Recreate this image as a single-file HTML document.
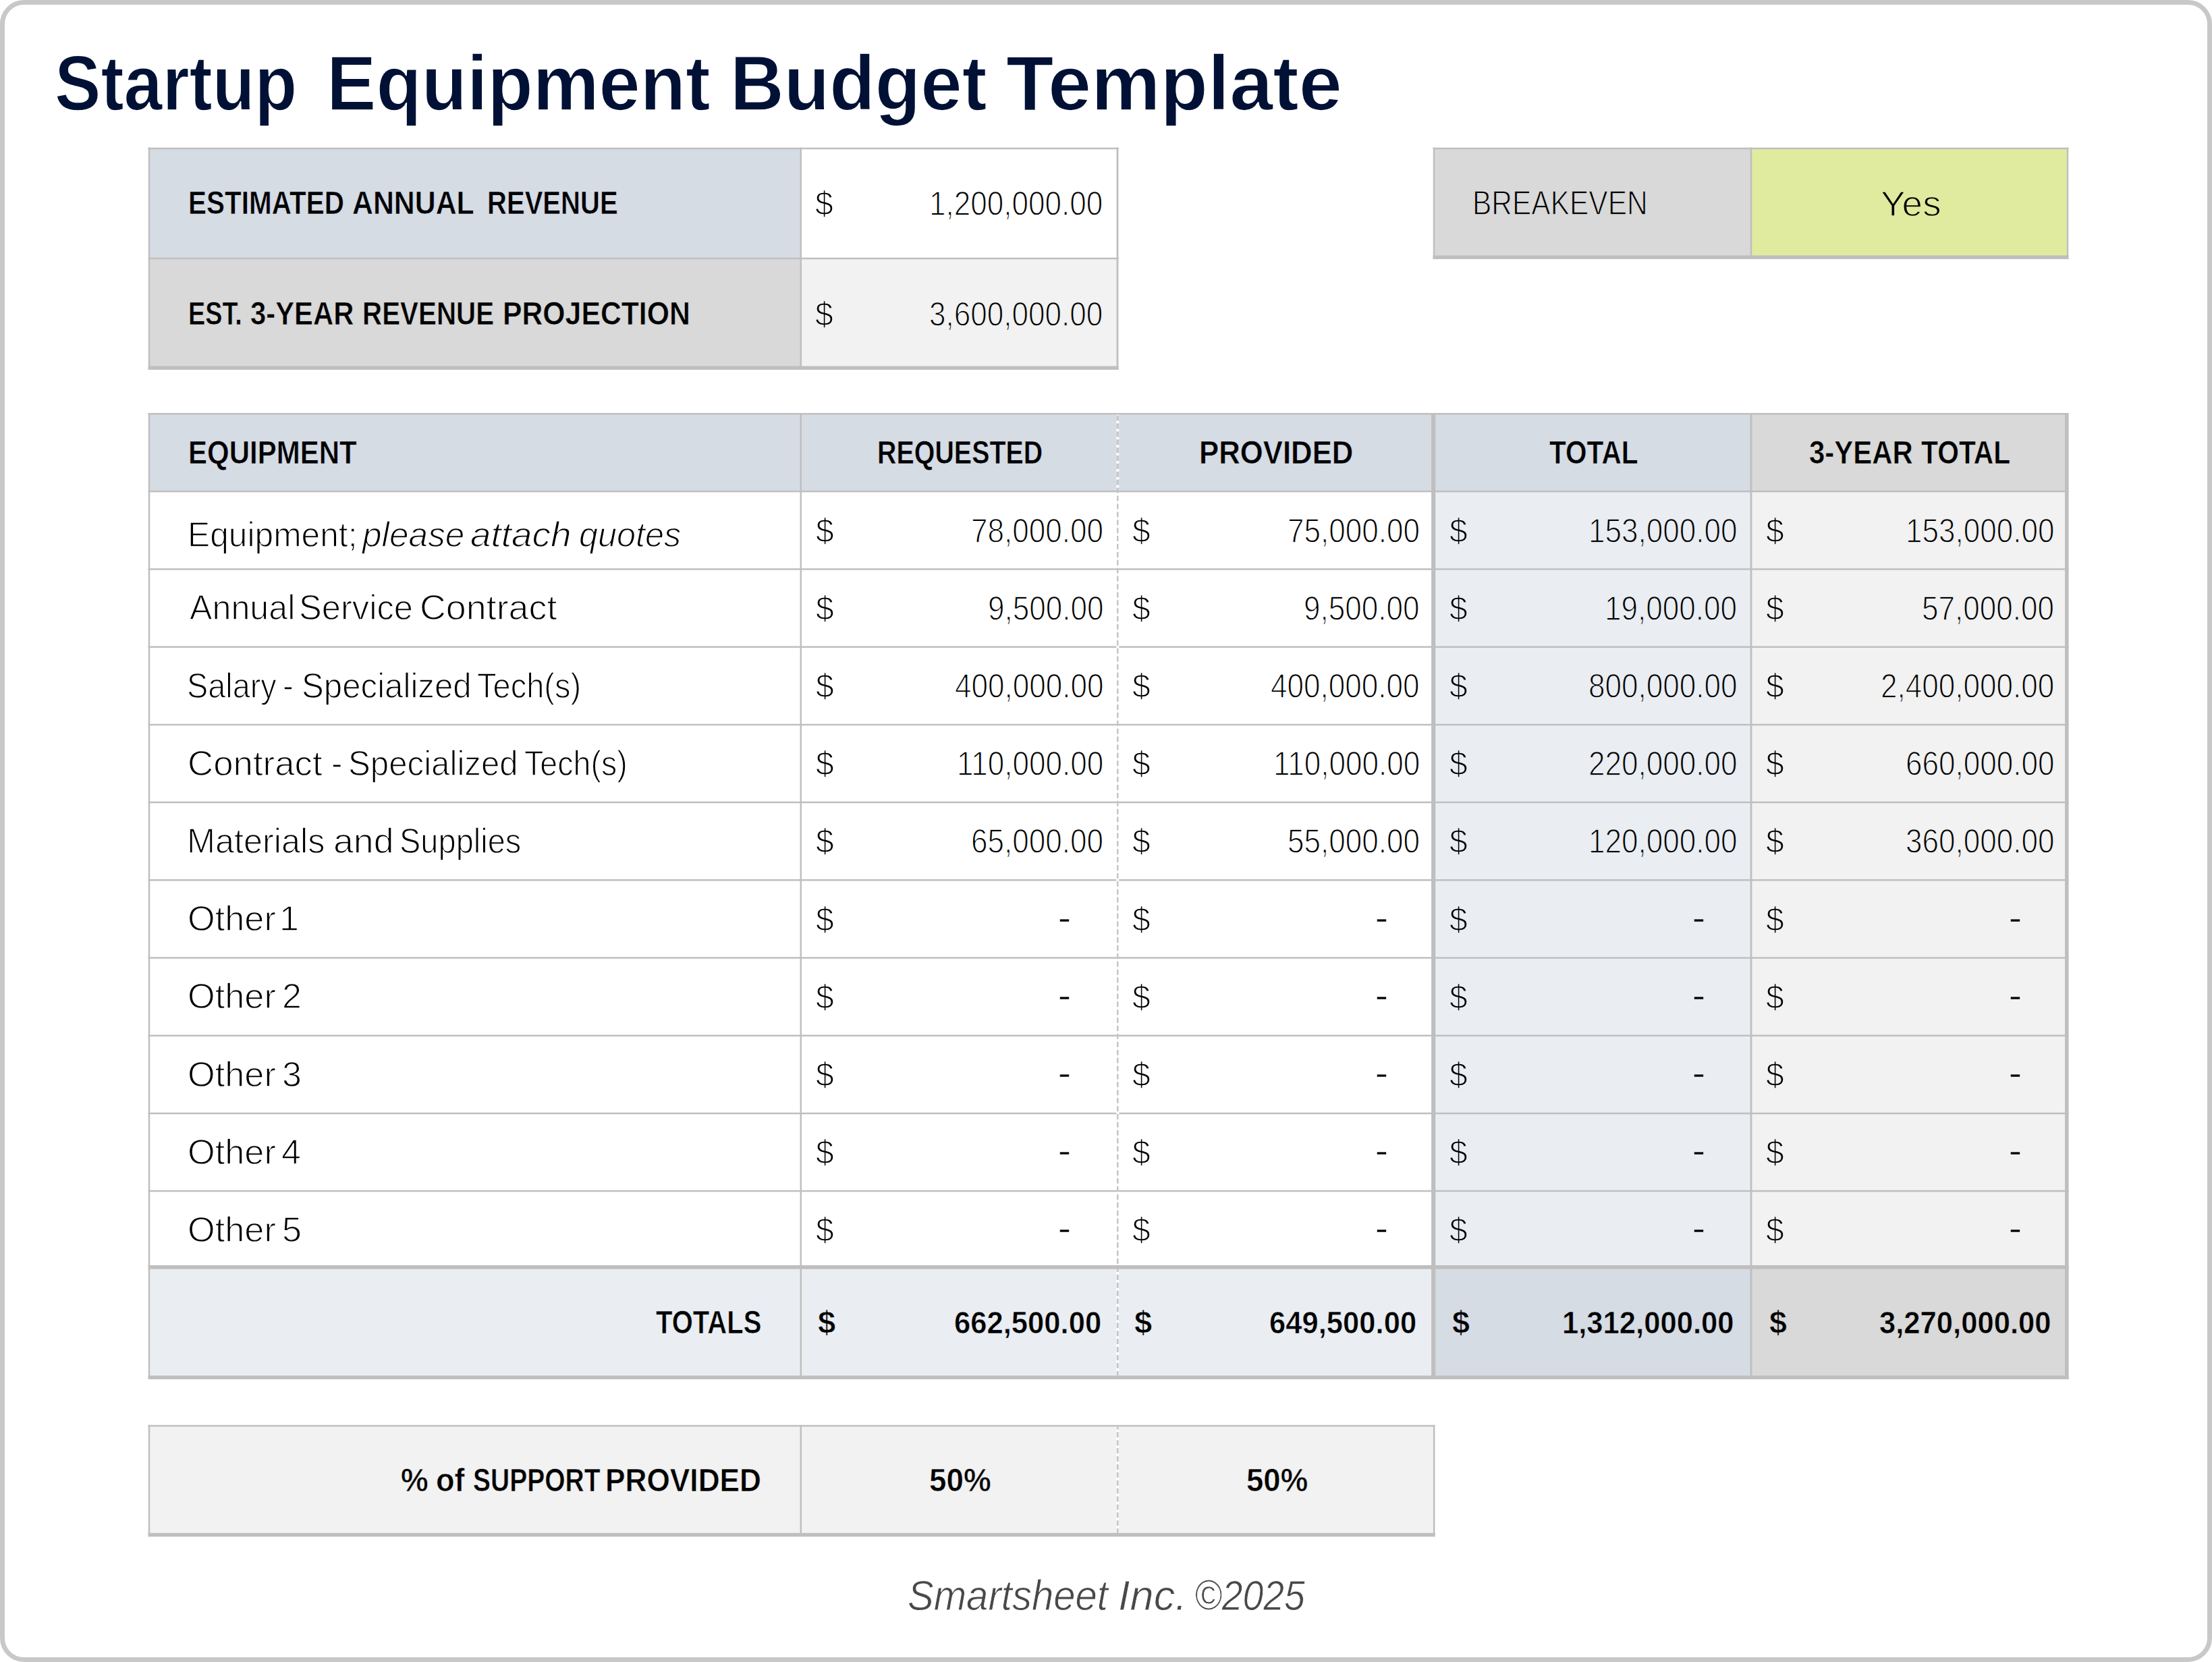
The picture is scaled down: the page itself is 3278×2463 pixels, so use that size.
<!DOCTYPE html>
<html lang="en">
<head>
<meta charset="utf-8">
<title>Startup Equipment Budget Template</title>
<style>
html,body{margin:0;padding:0;background:#fff;}
body{width:3278px;height:2463px;position:relative;overflow:hidden;font-family:"Liberation Sans", sans-serif;color:#000000;}
svg.grid{position:absolute;left:0;top:0;display:block;}
.t{position:absolute;white-space:pre;transform-origin:0 0;display:block;}
</style>
</head>
<body>
<svg class="grid" width="3278" height="2463" viewBox="0 0 3278 2463">
<rect x="3.5" y="3.5" width="3271" height="2456" rx="32" ry="32" fill="#FFFFFF" stroke="#C8C8C8" stroke-width="7"/>
<rect x="221.00" y="219.90" width="965.80" height="163.10" fill="#D6DCE4"/>
<rect x="1186.80" y="219.90" width="469.50" height="163.10" fill="#FFFFFF"/>
<rect x="221.00" y="383.00" width="965.80" height="162.20" fill="#D9D9D9"/>
<rect x="1186.80" y="383.00" width="469.50" height="162.20" fill="#F2F2F2"/>
<rect x="2124.20" y="219.90" width="470.80" height="161.40" fill="#D9D9D9"/>
<rect x="2595.00" y="219.90" width="469.00" height="161.40" fill="#E1EBA0"/>
<rect x="221.00" y="613.30" width="2374.00" height="115.00" fill="#D6DCE4"/>
<rect x="2595.00" y="613.30" width="467.80" height="115.00" fill="#D9D9D9"/>
<rect x="2124.20" y="728.30" width="470.80" height="1149.50" fill="#EAEEF3"/>
<rect x="2595.00" y="728.30" width="467.80" height="1149.50" fill="#F2F2F2"/>
<rect x="221.00" y="1877.80" width="1903.20" height="163.40" fill="#EAEEF3"/>
<rect x="2124.20" y="1877.80" width="470.80" height="163.40" fill="#D6DCE4"/>
<rect x="2595.00" y="1877.80" width="467.80" height="163.40" fill="#D9D9D9"/>
<rect x="221.00" y="2113.10" width="1904.20" height="161.30" fill="#F2F2F2"/>
<line x1="219.60" y1="219.90" x2="1657.70" y2="219.90" stroke="#BFBFBF" stroke-width="2.50"/>
<line x1="219.60" y1="383.00" x2="1657.70" y2="383.00" stroke="#BFBFBF" stroke-width="2.50"/>
<line x1="219.60" y1="545.20" x2="1657.70" y2="545.20" stroke="#BFBFBF" stroke-width="5.40"/>
<line x1="221.00" y1="218.50" x2="221.00" y2="548.00" stroke="#BFBFBF" stroke-width="2.50"/>
<line x1="1186.80" y1="218.50" x2="1186.80" y2="548.00" stroke="#BFBFBF" stroke-width="2.50"/>
<line x1="1656.00" y1="218.50" x2="1656.00" y2="548.00" stroke="#BFBFBF" stroke-width="2.80"/>
<line x1="2123.60" y1="219.90" x2="3065.40" y2="219.90" stroke="#BFBFBF" stroke-width="2.50"/>
<line x1="2123.60" y1="381.30" x2="3065.40" y2="381.30" stroke="#BFBFBF" stroke-width="5.60"/>
<line x1="2125.00" y1="218.50" x2="2125.00" y2="384.10" stroke="#BFBFBF" stroke-width="2.50"/>
<line x1="2595.00" y1="218.50" x2="2595.00" y2="384.10" stroke="#BFBFBF" stroke-width="2.50"/>
<line x1="3064.00" y1="218.50" x2="3064.00" y2="384.10" stroke="#BFBFBF" stroke-width="2.50"/>
<line x1="219.60" y1="613.30" x2="3065.60" y2="613.30" stroke="#BFBFBF" stroke-width="2.50"/>
<line x1="219.60" y1="728.30" x2="3065.60" y2="728.30" stroke="#BFBFBF" stroke-width="2.50"/>
<line x1="219.60" y1="843.50" x2="3065.60" y2="843.50" stroke="#BFBFBF" stroke-width="2.50"/>
<line x1="219.60" y1="958.70" x2="3065.60" y2="958.70" stroke="#BFBFBF" stroke-width="2.50"/>
<line x1="219.60" y1="1073.90" x2="3065.60" y2="1073.90" stroke="#BFBFBF" stroke-width="2.50"/>
<line x1="219.60" y1="1189.10" x2="3065.60" y2="1189.10" stroke="#BFBFBF" stroke-width="2.50"/>
<line x1="219.60" y1="1304.30" x2="3065.60" y2="1304.30" stroke="#BFBFBF" stroke-width="2.50"/>
<line x1="219.60" y1="1419.50" x2="3065.60" y2="1419.50" stroke="#BFBFBF" stroke-width="2.50"/>
<line x1="219.60" y1="1534.70" x2="3065.60" y2="1534.70" stroke="#BFBFBF" stroke-width="2.50"/>
<line x1="219.60" y1="1649.90" x2="3065.60" y2="1649.90" stroke="#BFBFBF" stroke-width="2.50"/>
<line x1="219.60" y1="1765.10" x2="3065.60" y2="1765.10" stroke="#BFBFBF" stroke-width="2.50"/>
<line x1="221.00" y1="611.90" x2="221.00" y2="2044.00" stroke="#BFBFBF" stroke-width="2.50"/>
<line x1="1186.80" y1="611.90" x2="1186.80" y2="2044.00" stroke="#BFBFBF" stroke-width="2.50"/>
<line x1="1656.30" y1="614.60" x2="1656.30" y2="2038.60" stroke="#C4C4C4" stroke-width="2.4"/>
<line x1="1656.30" y1="614.60" x2="1656.30" y2="2038.60" stroke="#FFFFFF" stroke-width="3.90" stroke-dasharray="3.9 8" stroke-dashoffset="-9.00"/>
<line x1="2124.20" y1="611.90" x2="2124.20" y2="2044.00" stroke="#BFBFBF" stroke-width="6.20"/>
<line x1="2595.00" y1="611.90" x2="2595.00" y2="2044.00" stroke="#BFBFBF" stroke-width="2.80"/>
<line x1="3062.80" y1="611.90" x2="3062.80" y2="2044.00" stroke="#BFBFBF" stroke-width="5.60"/>
<line x1="219.60" y1="1877.80" x2="3065.60" y2="1877.80" stroke="#BFBFBF" stroke-width="5.80"/>
<line x1="219.60" y1="2041.20" x2="3065.60" y2="2041.20" stroke="#BFBFBF" stroke-width="5.60"/>
<line x1="219.60" y1="2113.10" x2="2126.60" y2="2113.10" stroke="#BFBFBF" stroke-width="2.50"/>
<line x1="219.60" y1="2274.40" x2="2126.60" y2="2274.40" stroke="#BFBFBF" stroke-width="5.50"/>
<line x1="221.00" y1="2111.70" x2="221.00" y2="2277.20" stroke="#BFBFBF" stroke-width="2.50"/>
<line x1="1186.80" y1="2111.70" x2="1186.80" y2="2277.20" stroke="#BFBFBF" stroke-width="2.50"/>
<line x1="2125.20" y1="2111.70" x2="2125.20" y2="2277.20" stroke="#BFBFBF" stroke-width="2.50"/>
<line x1="1656.30" y1="2114.40" x2="1656.30" y2="2271.80" stroke="#C4C4C4" stroke-width="2.4"/>
<line x1="1656.30" y1="2114.40" x2="1656.30" y2="2271.80" stroke="#FFFFFF" stroke-width="3.90" stroke-dasharray="3.9 8" stroke-dashoffset="-4.00"/>
</svg>
<div class="sheet">
<div class="g"><span class="t" style="left:81.14px;top:54.44px;font-size:115.12px;line-height:138.14px;transform:scaleX(0.8913);font-weight:700;color:#001135;-webkit-text-stroke:1.6px #FFFFFF;">Startup</span> <span class="t" style="left:483.91px;top:54.44px;font-size:115.12px;line-height:138.14px;transform:scaleX(0.9562);font-weight:700;color:#001135;-webkit-text-stroke:1.6px #FFFFFF;">Equipment</span> <span class="t" style="left:1082.44px;top:54.44px;font-size:115.12px;line-height:138.14px;transform:scaleX(0.9597);font-weight:700;color:#001135;-webkit-text-stroke:1.6px #FFFFFF;">Budget</span> <span class="t" style="left:1490.99px;top:54.44px;font-size:115.12px;line-height:138.14px;transform:scaleX(1.0021);font-weight:700;color:#001135;-webkit-text-stroke:1.6px #FFFFFF;">Template</span></div>
<div class="g"><span class="t" style="left:278.76px;top:272.42px;font-size:48.26px;line-height:57.91px;transform:scaleX(0.8393);font-weight:700;-webkit-text-stroke:0.6px #D6DCE4;">ESTIMATED</span> <span class="t" style="left:521.72px;top:272.42px;font-size:48.26px;line-height:57.91px;transform:scaleX(0.8875);font-weight:700;-webkit-text-stroke:0.6px #D6DCE4;">ANNUAL</span> <span class="t" style="left:721.83px;top:272.42px;font-size:48.26px;line-height:57.91px;transform:scaleX(0.8301);font-weight:700;-webkit-text-stroke:0.6px #D6DCE4;">REVENUE</span></div>
<div class="g"><span class="t" style="left:279.09px;top:435.72px;font-size:48.26px;line-height:57.91px;transform:scaleX(0.7830);font-weight:700;-webkit-text-stroke:0.6px #D9D9D9;">EST.</span> <span class="t" style="left:370.81px;top:435.72px;font-size:48.26px;line-height:57.91px;transform:scaleX(0.8671);font-weight:700;-webkit-text-stroke:0.6px #D9D9D9;">3-YEAR</span> <span class="t" style="left:537.19px;top:435.72px;font-size:48.26px;line-height:57.91px;transform:scaleX(0.8363);font-weight:700;-webkit-text-stroke:0.6px #D9D9D9;">REVENUE</span> <span class="t" style="left:745.47px;top:435.72px;font-size:48.26px;line-height:57.91px;transform:scaleX(0.8858);font-weight:700;-webkit-text-stroke:0.6px #D9D9D9;">PROJECTION</span></div>
<span class="t" style="left:2181.63px;top:271.57px;font-size:49.85px;line-height:59.82px;transform:scaleX(0.8523);-webkit-text-stroke:1.3px #D9D9D9;">BREAKEVEN</span>
<span class="t" style="left:2787.29px;top:270.82px;font-size:52.33px;line-height:62.8px;transform:scaleX(1.0494);-webkit-text-stroke:1.3px #E1EBA0;">Yes</span>
<span class="t" style="left:278.57px;top:641.82px;font-size:48.26px;line-height:57.91px;transform:scaleX(0.8702);font-weight:700;-webkit-text-stroke:0.6px #D6DCE4;">EQUIPMENT</span>
<span class="t" style="left:1299.51px;top:641.82px;font-size:48.26px;line-height:57.91px;transform:scaleX(0.8167);font-weight:700;-webkit-text-stroke:0.6px #D6DCE4;">REQUESTED</span>
<span class="t" style="left:1777.32px;top:641.82px;font-size:48.26px;line-height:57.91px;transform:scaleX(0.9062);font-weight:700;-webkit-text-stroke:0.6px #D6DCE4;">PROVIDED</span>
<span class="t" style="left:2295.65px;top:641.82px;font-size:48.26px;line-height:57.91px;transform:scaleX(0.8409);font-weight:700;-webkit-text-stroke:0.6px #D6DCE4;">TOTAL</span>
<div class="g"><span class="t" style="left:2681.40px;top:641.82px;font-size:48.26px;line-height:57.91px;transform:scaleX(0.8688);font-weight:700;-webkit-text-stroke:0.6px #D9D9D9;">3-YEAR</span> <span class="t" style="left:2847.45px;top:641.82px;font-size:48.26px;line-height:57.91px;transform:scaleX(0.8458);font-weight:700;-webkit-text-stroke:0.6px #D9D9D9;">TOTAL</span></div>
<div class="g"><span class="t" style="left:277.88px;top:761.73px;font-size:51.16px;line-height:61.39px;transform:scaleX(0.9718);-webkit-text-stroke:1.3px #FFFFFF;">Equipment;</span> <span class="t" style="left:536.74px;top:761.73px;font-size:51.16px;line-height:61.39px;transform:scaleX(1.0045);font-style:italic;-webkit-text-stroke:1.3px #FFFFFF;">please</span> <span class="t" style="left:697.04px;top:761.73px;font-size:51.16px;line-height:61.39px;transform:scaleX(1.0730);font-style:italic;-webkit-text-stroke:1.3px #FFFFFF;">attach</span> <span class="t" style="left:857.79px;top:761.73px;font-size:51.16px;line-height:61.39px;transform:scaleX(0.9844);font-style:italic;-webkit-text-stroke:1.3px #FFFFFF;">quotes</span></div>
<div class="g"><span class="t" style="left:280.52px;top:870.33px;font-size:51.16px;line-height:61.39px;transform:scaleX(0.9812);-webkit-text-stroke:1.3px #FFFFFF;">Annual</span> <span class="t" style="left:443.20px;top:870.33px;font-size:51.16px;line-height:61.39px;transform:scaleX(0.9900);-webkit-text-stroke:1.3px #FFFFFF;">Service</span> <span class="t" style="left:622.28px;top:870.33px;font-size:51.16px;line-height:61.39px;transform:scaleX(1.0518);-webkit-text-stroke:1.3px #FFFFFF;">Contract</span></div>
<div class="g"><span class="t" style="left:277.16px;top:985.53px;font-size:51.16px;line-height:61.39px;transform:scaleX(0.9154);-webkit-text-stroke:1.3px #FFFFFF;">Salary</span> <span class="t" style="left:419.21px;top:985.53px;font-size:51.16px;line-height:61.39px;transform:scaleX(0.9282);-webkit-text-stroke:1.3px #FFFFFF;">-</span> <span class="t" style="left:446.81px;top:985.53px;font-size:51.16px;line-height:61.39px;transform:scaleX(0.9620);-webkit-text-stroke:1.3px #FFFFFF;">Specialized</span> <span class="t" style="left:706.66px;top:985.53px;font-size:51.16px;line-height:61.39px;transform:scaleX(0.9193);-webkit-text-stroke:1.3px #FFFFFF;">Tech(s)</span></div>
<div class="g"><span class="t" style="left:278.03px;top:1100.73px;font-size:51.16px;line-height:61.39px;transform:scaleX(1.0326);-webkit-text-stroke:1.3px #FFFFFF;">Contract</span> <span class="t" style="left:491.15px;top:1100.73px;font-size:51.16px;line-height:61.39px;transform:scaleX(0.9642);-webkit-text-stroke:1.3px #FFFFFF;">-</span> <span class="t" style="left:516.01px;top:1100.73px;font-size:51.16px;line-height:61.39px;transform:scaleX(0.9620);-webkit-text-stroke:1.3px #FFFFFF;">Specialized</span> <span class="t" style="left:776.67px;top:1100.73px;font-size:51.16px;line-height:61.39px;transform:scaleX(0.9106);-webkit-text-stroke:1.3px #FFFFFF;">Tech(s)</span></div>
<div class="g"><span class="t" style="left:277.02px;top:1215.93px;font-size:51.16px;line-height:61.39px;transform:scaleX(0.9854);-webkit-text-stroke:1.3px #FFFFFF;">Materials</span> <span class="t" style="left:494.17px;top:1215.93px;font-size:51.16px;line-height:61.39px;transform:scaleX(1.0495);-webkit-text-stroke:1.3px #FFFFFF;">and</span> <span class="t" style="left:591.53px;top:1215.93px;font-size:51.16px;line-height:61.39px;transform:scaleX(0.9190);-webkit-text-stroke:1.3px #FFFFFF;">Supplies</span></div>
<div class="g"><span class="t" style="left:277.59px;top:1331.13px;font-size:51.16px;line-height:61.39px;transform:scaleX(1.0226);-webkit-text-stroke:1.3px #FFFFFF;">Other</span> <span class="t" style="left:413.86px;top:1331.13px;font-size:51.16px;line-height:61.39px;transform:scaleX(1.0185);-webkit-text-stroke:1.3px #FFFFFF;">1</span></div>
<div class="g"><span class="t" style="left:277.59px;top:1446.33px;font-size:51.16px;line-height:61.39px;transform:scaleX(1.0226);-webkit-text-stroke:1.3px #FFFFFF;">Other</span> <span class="t" style="left:417.66px;top:1446.33px;font-size:51.16px;line-height:61.39px;transform:scaleX(1.0185);-webkit-text-stroke:1.3px #FFFFFF;">2</span></div>
<div class="g"><span class="t" style="left:277.59px;top:1561.53px;font-size:51.16px;line-height:61.39px;transform:scaleX(1.0226);-webkit-text-stroke:1.3px #FFFFFF;">Other</span> <span class="t" style="left:417.89px;top:1561.53px;font-size:51.16px;line-height:61.39px;transform:scaleX(1.0185);-webkit-text-stroke:1.3px #FFFFFF;">3</span></div>
<div class="g"><span class="t" style="left:277.59px;top:1676.73px;font-size:51.16px;line-height:61.39px;transform:scaleX(1.0226);-webkit-text-stroke:1.3px #FFFFFF;">Other</span> <span class="t" style="left:417.25px;top:1676.73px;font-size:51.16px;line-height:61.39px;transform:scaleX(1.0185);-webkit-text-stroke:1.3px #FFFFFF;">4</span></div>
<div class="g"><span class="t" style="left:277.59px;top:1791.93px;font-size:51.16px;line-height:61.39px;transform:scaleX(1.0226);-webkit-text-stroke:1.3px #FFFFFF;">Other</span> <span class="t" style="left:417.78px;top:1791.93px;font-size:51.16px;line-height:61.39px;transform:scaleX(1.0185);-webkit-text-stroke:1.3px #FFFFFF;">5</span></div>
<span class="t" style="left:972.06px;top:1931.32px;font-size:48.26px;line-height:57.91px;transform:scaleX(0.8296);font-weight:700;-webkit-text-stroke:0.6px #EAEEF3;">TOTALS</span>
<div class="g"><span class="t" style="left:594.45px;top:2165.22px;font-size:48.26px;line-height:57.91px;transform:scaleX(0.9494);font-weight:700;-webkit-text-stroke:0.6px #F2F2F2;">%</span> <span class="t" style="left:646.34px;top:2165.22px;font-size:48.26px;line-height:57.91px;transform:scaleX(0.9358);font-weight:700;-webkit-text-stroke:0.6px #F2F2F2;">of</span> <span class="t" style="left:700.64px;top:2165.22px;font-size:48.26px;line-height:57.91px;transform:scaleX(0.8088);font-weight:700;-webkit-text-stroke:0.6px #F2F2F2;">SUPPORT</span> <span class="t" style="left:897.02px;top:2165.22px;font-size:48.26px;line-height:57.91px;transform:scaleX(0.9167);font-weight:700;-webkit-text-stroke:0.6px #F2F2F2;">PROVIDED</span></div>
<span class="t" style="left:1377.10px;top:2164.62px;font-size:48.26px;line-height:57.91px;transform:scaleX(0.9490);font-weight:700;-webkit-text-stroke:0.6px #F2F2F2;">50%</span>
<span class="t" style="left:1846.51px;top:2164.62px;font-size:48.26px;line-height:57.91px;transform:scaleX(0.9456);font-weight:700;-webkit-text-stroke:0.6px #F2F2F2;">50%</span>
<div class="g"><span class="t" style="left:1345.14px;top:2326.33px;font-size:63.52px;line-height:76.22px;transform:scaleX(0.9143);font-style:italic;color:#484848;-webkit-text-stroke:0.9px #FFFFFF;">Smartsheet</span> <span class="t" style="left:1657.37px;top:2326.33px;font-size:63.52px;line-height:76.22px;transform:scaleX(0.9962);font-style:italic;color:#484848;-webkit-text-stroke:0.9px #FFFFFF;">Inc.</span> <span class="t" style="left:1769.52px;top:2326.33px;font-size:63.52px;line-height:76.22px;transform:scaleX(0.8712);font-style:italic;color:#484848;-webkit-text-stroke:0.9px #FFFFFF;">©2025</span></div>
<span class="t" style="left:1438.58px;top:757.62px;font-size:49.79px;line-height:59.75px;transform:scaleX(0.8855);-webkit-text-stroke:1.3px #FFFFFF;">78,000.00</span>
<span class="t" style="left:1908.38px;top:757.62px;font-size:49.79px;line-height:59.75px;transform:scaleX(0.8855);-webkit-text-stroke:1.3px #FFFFFF;">75,000.00</span>
<span class="t" style="left:2354.18px;top:757.62px;font-size:49.79px;line-height:59.75px;transform:scaleX(0.8855);-webkit-text-stroke:1.3px #EAEEF3;">153,000.00</span>
<span class="t" style="left:2823.58px;top:757.62px;font-size:49.79px;line-height:59.75px;transform:scaleX(0.8855);-webkit-text-stroke:1.3px #F2F2F2;">153,000.00</span>
<span class="t" style="left:1463.62px;top:872.82px;font-size:49.79px;line-height:59.75px;transform:scaleX(0.8855);-webkit-text-stroke:1.3px #FFFFFF;">9,500.00</span>
<span class="t" style="left:1932.42px;top:872.82px;font-size:49.79px;line-height:59.75px;transform:scaleX(0.8855);-webkit-text-stroke:1.3px #FFFFFF;">9,500.00</span>
<span class="t" style="left:2378.18px;top:872.82px;font-size:49.79px;line-height:59.75px;transform:scaleX(0.8855);-webkit-text-stroke:1.3px #EAEEF3;">19,000.00</span>
<span class="t" style="left:2847.58px;top:872.82px;font-size:49.79px;line-height:59.75px;transform:scaleX(0.8855);-webkit-text-stroke:1.3px #F2F2F2;">57,000.00</span>
<span class="t" style="left:1414.58px;top:988.02px;font-size:49.79px;line-height:59.75px;transform:scaleX(0.8855);-webkit-text-stroke:1.3px #FFFFFF;">400,000.00</span>
<span class="t" style="left:1883.38px;top:988.02px;font-size:49.79px;line-height:59.75px;transform:scaleX(0.8855);-webkit-text-stroke:1.3px #FFFFFF;">400,000.00</span>
<span class="t" style="left:2354.18px;top:988.02px;font-size:49.79px;line-height:59.75px;transform:scaleX(0.8855);-webkit-text-stroke:1.3px #EAEEF3;">800,000.00</span>
<span class="t" style="left:2786.98px;top:988.02px;font-size:49.79px;line-height:59.75px;transform:scaleX(0.8855);-webkit-text-stroke:1.3px #F2F2F2;">2,400,000.00</span>
<span class="t" style="left:1418.02px;top:1103.22px;font-size:49.79px;line-height:59.75px;transform:scaleX(0.8855);-webkit-text-stroke:1.3px #FFFFFF;">110,000.00</span>
<span class="t" style="left:1886.82px;top:1103.22px;font-size:49.79px;line-height:59.75px;transform:scaleX(0.8855);-webkit-text-stroke:1.3px #FFFFFF;">110,000.00</span>
<span class="t" style="left:2354.18px;top:1103.22px;font-size:49.79px;line-height:59.75px;transform:scaleX(0.8855);-webkit-text-stroke:1.3px #EAEEF3;">220,000.00</span>
<span class="t" style="left:2823.58px;top:1103.22px;font-size:49.79px;line-height:59.75px;transform:scaleX(0.8855);-webkit-text-stroke:1.3px #F2F2F2;">660,000.00</span>
<span class="t" style="left:1438.58px;top:1218.42px;font-size:49.79px;line-height:59.75px;transform:scaleX(0.8855);-webkit-text-stroke:1.3px #FFFFFF;">65,000.00</span>
<span class="t" style="left:1908.38px;top:1218.42px;font-size:49.79px;line-height:59.75px;transform:scaleX(0.8855);-webkit-text-stroke:1.3px #FFFFFF;">55,000.00</span>
<span class="t" style="left:2354.18px;top:1218.42px;font-size:49.79px;line-height:59.75px;transform:scaleX(0.8855);-webkit-text-stroke:1.3px #EAEEF3;">120,000.00</span>
<span class="t" style="left:2823.58px;top:1218.42px;font-size:49.79px;line-height:59.75px;transform:scaleX(0.8855);-webkit-text-stroke:1.3px #F2F2F2;">360,000.00</span>
<span class="t" style="left:1568.20px;top:1330.57px;font-size:49.79px;line-height:59.75px;transform:scaleX(1.1384);-webkit-text-stroke:0.4px #FFFFFF;">-</span>
<span class="t" style="left:2038.00px;top:1330.57px;font-size:49.79px;line-height:59.75px;transform:scaleX(1.1384);-webkit-text-stroke:0.4px #FFFFFF;">-</span>
<span class="t" style="left:2507.80px;top:1330.57px;font-size:49.79px;line-height:59.75px;transform:scaleX(1.1384);-webkit-text-stroke:0.4px #EAEEF3;">-</span>
<span class="t" style="left:2977.20px;top:1330.57px;font-size:49.79px;line-height:59.75px;transform:scaleX(1.1384);-webkit-text-stroke:0.4px #F2F2F2;">-</span>
<span class="t" style="left:1568.20px;top:1445.77px;font-size:49.79px;line-height:59.75px;transform:scaleX(1.1384);-webkit-text-stroke:0.4px #FFFFFF;">-</span>
<span class="t" style="left:2038.00px;top:1445.77px;font-size:49.79px;line-height:59.75px;transform:scaleX(1.1384);-webkit-text-stroke:0.4px #FFFFFF;">-</span>
<span class="t" style="left:2507.80px;top:1445.77px;font-size:49.79px;line-height:59.75px;transform:scaleX(1.1384);-webkit-text-stroke:0.4px #EAEEF3;">-</span>
<span class="t" style="left:2977.20px;top:1445.77px;font-size:49.79px;line-height:59.75px;transform:scaleX(1.1384);-webkit-text-stroke:0.4px #F2F2F2;">-</span>
<span class="t" style="left:1568.20px;top:1560.97px;font-size:49.79px;line-height:59.75px;transform:scaleX(1.1384);-webkit-text-stroke:0.4px #FFFFFF;">-</span>
<span class="t" style="left:2038.00px;top:1560.97px;font-size:49.79px;line-height:59.75px;transform:scaleX(1.1384);-webkit-text-stroke:0.4px #FFFFFF;">-</span>
<span class="t" style="left:2507.80px;top:1560.97px;font-size:49.79px;line-height:59.75px;transform:scaleX(1.1384);-webkit-text-stroke:0.4px #EAEEF3;">-</span>
<span class="t" style="left:2977.20px;top:1560.97px;font-size:49.79px;line-height:59.75px;transform:scaleX(1.1384);-webkit-text-stroke:0.4px #F2F2F2;">-</span>
<span class="t" style="left:1568.20px;top:1676.17px;font-size:49.79px;line-height:59.75px;transform:scaleX(1.1384);-webkit-text-stroke:0.4px #FFFFFF;">-</span>
<span class="t" style="left:2038.00px;top:1676.17px;font-size:49.79px;line-height:59.75px;transform:scaleX(1.1384);-webkit-text-stroke:0.4px #FFFFFF;">-</span>
<span class="t" style="left:2507.80px;top:1676.17px;font-size:49.79px;line-height:59.75px;transform:scaleX(1.1384);-webkit-text-stroke:0.4px #EAEEF3;">-</span>
<span class="t" style="left:2977.20px;top:1676.17px;font-size:49.79px;line-height:59.75px;transform:scaleX(1.1384);-webkit-text-stroke:0.4px #F2F2F2;">-</span>
<span class="t" style="left:1568.20px;top:1791.37px;font-size:49.79px;line-height:59.75px;transform:scaleX(1.1384);-webkit-text-stroke:0.4px #FFFFFF;">-</span>
<span class="t" style="left:2038.00px;top:1791.37px;font-size:49.79px;line-height:59.75px;transform:scaleX(1.1384);-webkit-text-stroke:0.4px #FFFFFF;">-</span>
<span class="t" style="left:2507.80px;top:1791.37px;font-size:49.79px;line-height:59.75px;transform:scaleX(1.1384);-webkit-text-stroke:0.4px #EAEEF3;">-</span>
<span class="t" style="left:2977.20px;top:1791.37px;font-size:49.79px;line-height:59.75px;transform:scaleX(1.1384);-webkit-text-stroke:0.4px #F2F2F2;">-</span>
<span class="t" style="left:1377.38px;top:273.02px;font-size:49.79px;line-height:59.75px;transform:scaleX(0.8855);-webkit-text-stroke:1.3px #FFFFFF;">1,200,000.00</span>
<span class="t" style="left:1377.38px;top:437.12px;font-size:49.79px;line-height:59.75px;transform:scaleX(0.8855);-webkit-text-stroke:1.3px #F2F2F2;">3,600,000.00</span>
<span class="t" style="left:1414.03px;top:1932.43px;font-size:47.09px;line-height:56.51px;transform:scaleX(0.9259);font-weight:700;-webkit-text-stroke:0.6px #EAEEF3;">662,500.00</span>
<span class="t" style="left:1881.43px;top:1932.43px;font-size:47.09px;line-height:56.51px;transform:scaleX(0.9259);font-weight:700;-webkit-text-stroke:0.6px #EAEEF3;">649,500.00</span>
<span class="t" style="left:2315.33px;top:1932.43px;font-size:47.09px;line-height:56.51px;transform:scaleX(0.9259);font-weight:700;-webkit-text-stroke:0.6px #D6DCE4;">1,312,000.00</span>
<span class="t" style="left:2785.11px;top:1932.43px;font-size:47.09px;line-height:56.51px;transform:scaleX(0.9259);font-weight:700;-webkit-text-stroke:0.6px #D9D9D9;">3,270,000.00</span>
<span class="t" style="left:1208.66px;top:757.62px;font-size:49.79px;line-height:59.75px;transform:scaleX(0.9652);-webkit-text-stroke:1.3px #FFFFFF;">$</span>
<span class="t" style="left:1678.10px;top:757.62px;font-size:49.79px;line-height:59.75px;transform:scaleX(0.9652);-webkit-text-stroke:1.3px #FFFFFF;">$</span>
<span class="t" style="left:2148.10px;top:757.62px;font-size:49.79px;line-height:59.75px;transform:scaleX(0.9652);-webkit-text-stroke:1.3px #EAEEF3;">$</span>
<span class="t" style="left:2616.86px;top:757.62px;font-size:49.79px;line-height:59.75px;transform:scaleX(0.9652);-webkit-text-stroke:1.3px #F2F2F2;">$</span>
<span class="t" style="left:1208.66px;top:872.82px;font-size:49.79px;line-height:59.75px;transform:scaleX(0.9652);-webkit-text-stroke:1.3px #FFFFFF;">$</span>
<span class="t" style="left:1678.10px;top:872.82px;font-size:49.79px;line-height:59.75px;transform:scaleX(0.9652);-webkit-text-stroke:1.3px #FFFFFF;">$</span>
<span class="t" style="left:2148.10px;top:872.82px;font-size:49.79px;line-height:59.75px;transform:scaleX(0.9652);-webkit-text-stroke:1.3px #EAEEF3;">$</span>
<span class="t" style="left:2616.86px;top:872.82px;font-size:49.79px;line-height:59.75px;transform:scaleX(0.9652);-webkit-text-stroke:1.3px #F2F2F2;">$</span>
<span class="t" style="left:1208.66px;top:988.02px;font-size:49.79px;line-height:59.75px;transform:scaleX(0.9652);-webkit-text-stroke:1.3px #FFFFFF;">$</span>
<span class="t" style="left:1678.10px;top:988.02px;font-size:49.79px;line-height:59.75px;transform:scaleX(0.9652);-webkit-text-stroke:1.3px #FFFFFF;">$</span>
<span class="t" style="left:2148.10px;top:988.02px;font-size:49.79px;line-height:59.75px;transform:scaleX(0.9652);-webkit-text-stroke:1.3px #EAEEF3;">$</span>
<span class="t" style="left:2616.86px;top:988.02px;font-size:49.79px;line-height:59.75px;transform:scaleX(0.9652);-webkit-text-stroke:1.3px #F2F2F2;">$</span>
<span class="t" style="left:1208.66px;top:1103.22px;font-size:49.79px;line-height:59.75px;transform:scaleX(0.9652);-webkit-text-stroke:1.3px #FFFFFF;">$</span>
<span class="t" style="left:1678.10px;top:1103.22px;font-size:49.79px;line-height:59.75px;transform:scaleX(0.9652);-webkit-text-stroke:1.3px #FFFFFF;">$</span>
<span class="t" style="left:2148.10px;top:1103.22px;font-size:49.79px;line-height:59.75px;transform:scaleX(0.9652);-webkit-text-stroke:1.3px #EAEEF3;">$</span>
<span class="t" style="left:2616.86px;top:1103.22px;font-size:49.79px;line-height:59.75px;transform:scaleX(0.9652);-webkit-text-stroke:1.3px #F2F2F2;">$</span>
<span class="t" style="left:1208.66px;top:1218.42px;font-size:49.79px;line-height:59.75px;transform:scaleX(0.9652);-webkit-text-stroke:1.3px #FFFFFF;">$</span>
<span class="t" style="left:1678.10px;top:1218.42px;font-size:49.79px;line-height:59.75px;transform:scaleX(0.9652);-webkit-text-stroke:1.3px #FFFFFF;">$</span>
<span class="t" style="left:2148.10px;top:1218.42px;font-size:49.79px;line-height:59.75px;transform:scaleX(0.9652);-webkit-text-stroke:1.3px #EAEEF3;">$</span>
<span class="t" style="left:2616.86px;top:1218.42px;font-size:49.79px;line-height:59.75px;transform:scaleX(0.9652);-webkit-text-stroke:1.3px #F2F2F2;">$</span>
<span class="t" style="left:1208.66px;top:1333.62px;font-size:49.79px;line-height:59.75px;transform:scaleX(0.9652);-webkit-text-stroke:1.3px #FFFFFF;">$</span>
<span class="t" style="left:1678.10px;top:1333.62px;font-size:49.79px;line-height:59.75px;transform:scaleX(0.9652);-webkit-text-stroke:1.3px #FFFFFF;">$</span>
<span class="t" style="left:2148.10px;top:1333.62px;font-size:49.79px;line-height:59.75px;transform:scaleX(0.9652);-webkit-text-stroke:1.3px #EAEEF3;">$</span>
<span class="t" style="left:2616.86px;top:1333.62px;font-size:49.79px;line-height:59.75px;transform:scaleX(0.9652);-webkit-text-stroke:1.3px #F2F2F2;">$</span>
<span class="t" style="left:1208.66px;top:1448.82px;font-size:49.79px;line-height:59.75px;transform:scaleX(0.9652);-webkit-text-stroke:1.3px #FFFFFF;">$</span>
<span class="t" style="left:1678.10px;top:1448.82px;font-size:49.79px;line-height:59.75px;transform:scaleX(0.9652);-webkit-text-stroke:1.3px #FFFFFF;">$</span>
<span class="t" style="left:2148.10px;top:1448.82px;font-size:49.79px;line-height:59.75px;transform:scaleX(0.9652);-webkit-text-stroke:1.3px #EAEEF3;">$</span>
<span class="t" style="left:2616.86px;top:1448.82px;font-size:49.79px;line-height:59.75px;transform:scaleX(0.9652);-webkit-text-stroke:1.3px #F2F2F2;">$</span>
<span class="t" style="left:1208.66px;top:1564.02px;font-size:49.79px;line-height:59.75px;transform:scaleX(0.9652);-webkit-text-stroke:1.3px #FFFFFF;">$</span>
<span class="t" style="left:1678.10px;top:1564.02px;font-size:49.79px;line-height:59.75px;transform:scaleX(0.9652);-webkit-text-stroke:1.3px #FFFFFF;">$</span>
<span class="t" style="left:2148.10px;top:1564.02px;font-size:49.79px;line-height:59.75px;transform:scaleX(0.9652);-webkit-text-stroke:1.3px #EAEEF3;">$</span>
<span class="t" style="left:2616.86px;top:1564.02px;font-size:49.79px;line-height:59.75px;transform:scaleX(0.9652);-webkit-text-stroke:1.3px #F2F2F2;">$</span>
<span class="t" style="left:1208.66px;top:1679.22px;font-size:49.79px;line-height:59.75px;transform:scaleX(0.9652);-webkit-text-stroke:1.3px #FFFFFF;">$</span>
<span class="t" style="left:1678.10px;top:1679.22px;font-size:49.79px;line-height:59.75px;transform:scaleX(0.9652);-webkit-text-stroke:1.3px #FFFFFF;">$</span>
<span class="t" style="left:2148.10px;top:1679.22px;font-size:49.79px;line-height:59.75px;transform:scaleX(0.9652);-webkit-text-stroke:1.3px #EAEEF3;">$</span>
<span class="t" style="left:2616.86px;top:1679.22px;font-size:49.79px;line-height:59.75px;transform:scaleX(0.9652);-webkit-text-stroke:1.3px #F2F2F2;">$</span>
<span class="t" style="left:1208.66px;top:1794.42px;font-size:49.79px;line-height:59.75px;transform:scaleX(0.9652);-webkit-text-stroke:1.3px #FFFFFF;">$</span>
<span class="t" style="left:1678.10px;top:1794.42px;font-size:49.79px;line-height:59.75px;transform:scaleX(0.9652);-webkit-text-stroke:1.3px #FFFFFF;">$</span>
<span class="t" style="left:2148.10px;top:1794.42px;font-size:49.79px;line-height:59.75px;transform:scaleX(0.9652);-webkit-text-stroke:1.3px #EAEEF3;">$</span>
<span class="t" style="left:2616.86px;top:1794.42px;font-size:49.79px;line-height:59.75px;transform:scaleX(0.9652);-webkit-text-stroke:1.3px #F2F2F2;">$</span>
<span class="t" style="left:1208.49px;top:273.02px;font-size:49.79px;line-height:59.75px;transform:scaleX(0.9652);-webkit-text-stroke:1.3px #FFFFFF;">$</span>
<span class="t" style="left:1208.49px;top:437.12px;font-size:49.79px;line-height:59.75px;transform:scaleX(0.9652);-webkit-text-stroke:1.3px #F2F2F2;">$</span>
<span class="t" style="left:1211.70px;top:1932.43px;font-size:47.09px;line-height:56.51px;transform:scaleX(1.0002);font-weight:700;-webkit-text-stroke:0.6px #EAEEF3;">$</span>
<span class="t" style="left:1681.32px;top:1932.43px;font-size:47.09px;line-height:56.51px;transform:scaleX(1.0002);font-weight:700;-webkit-text-stroke:0.6px #EAEEF3;">$</span>
<span class="t" style="left:2151.76px;top:1932.43px;font-size:47.09px;line-height:56.51px;transform:scaleX(0.9900);font-weight:700;-webkit-text-stroke:0.6px #D6DCE4;">$</span>
<span class="t" style="left:2622.11px;top:1932.43px;font-size:47.09px;line-height:56.51px;transform:scaleX(0.9891);font-weight:700;-webkit-text-stroke:0.6px #D9D9D9;">$</span>
</div>
</body>
</html>
